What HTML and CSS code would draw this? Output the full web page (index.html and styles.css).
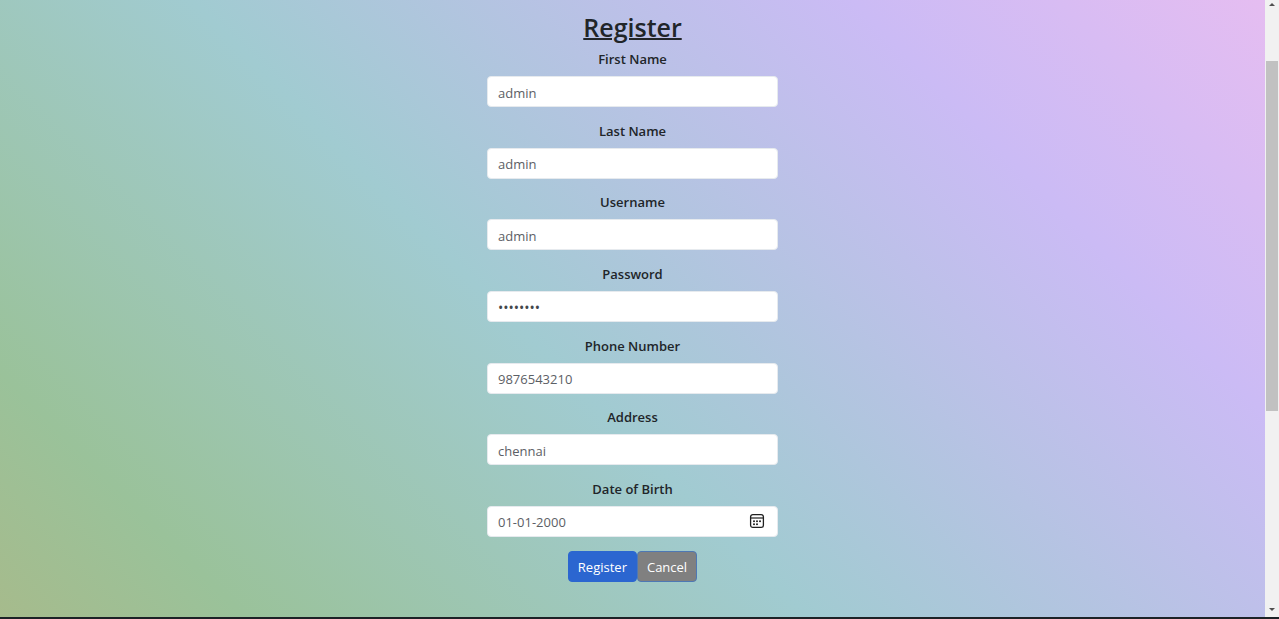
FILE: index.html
```
<!DOCTYPE html>
<html lang="en">
<head>
<meta charset="utf-8">
<meta name="viewport" content="width=device-width, initial-scale=1">
<title>Register</title>
<link rel="stylesheet" href="styles.css">
</head>
<body>
<div class="page">
  <main class="main">
    <form class="form">
      <h1 class="title">Register</h1>
      <div class="fields">
        <div class="field"><label class="label" for="first">First Name</label><input class="input" id="first" type="text" value="admin"></div>
        <div class="field"><label class="label" for="last">Last Name</label><input class="input" id="last" type="text" value="admin"></div>
        <div class="field"><label class="label" for="user">Username</label><input class="input" id="user" type="text" value="admin"></div>
        <div class="field"><label class="label" for="pass">Password</label><input class="input input-password" id="pass" type="password" value="password"></div>
        <div class="field"><label class="label" for="phone">Phone Number</label><input class="input" id="phone" type="tel" value="9876543210"></div>
        <div class="field"><label class="label" for="address">Address</label><input class="input" id="address" type="text" value="chennai"></div>
        <div class="field">
          <label class="label" for="dob">Date of Birth</label>
          <div class="date">
            <input class="date-input" id="dob" type="text" value="01-01-2000">
            <button class="picker" type="button" aria-label="Choose date">
              <svg viewBox="0 0 16 16" width="16" height="16" aria-hidden="true">
                <rect x="1.6" y="1.6" width="12.8" height="12.8" rx="2.2" fill="none" stroke="#202020" stroke-width="1.3"/>
                <path d="M1.6 5H14.4" stroke="#202020" stroke-width="1.2"/>
                <g fill="#202020"><circle cx="5" cy="8.2" r="1"/><circle cx="8" cy="8.2" r="1"/><circle cx="11" cy="8.2" r="1"/><circle cx="5" cy="11.2" r="1"/><circle cx="8" cy="11.2" r="1"/></g>
              </svg>
            </button>
          </div>
        </div>
      </div>
      <div class="actions">
        <button class="btn" type="submit">Register</button>
        <button class="btn btn-cancel" type="button">Cancel</button>
      </div>
    </form>
  </main>
  <div class="scrollbar" aria-hidden="true">
    <svg class="arrow" viewBox="0 0 8 4" width="8" height="4"><path d="M1 4L4 1L7 4Z" fill="#505050"/></svg>
    <div class="track"><div class="thumb"></div></div>
    <svg class="arrow" viewBox="0 0 8 4" width="8" height="4"><path d="M1 0L4 3L7 0Z" fill="#505050"/></svg>
  </div>
</div>
<div class="edge"></div>
</body>
</html>
```
FILE: styles.css
```
* { box-sizing: border-box; }
body {
  margin: 0;
  min-height: 100vh;
  display: flex;
  flex-direction: column;
  font-family: "Segoe UI", "Open Sans", "Noto Sans", sans-serif;
  font-size: 13px;
  line-height: 21px;
  color: #212529;
}
.page { flex: 1; display: flex; }
.main {
  flex: 1;
  display: flex;
  justify-content: center;
  padding: 11px 16px 35px;
  background: linear-gradient(45deg, #a6bb8c 0%, #9ac29a 13%, #a1cbd1 43%, #cbbbf5 78%, #e5bdf1 100%);
}
.form { width: 291px; display: flex; flex-direction: column; }
.title {
  margin: 0 0 6px;
  font-size: 25px;
  line-height: 32px;
  font-weight: 600;
  text-align: center;
  text-decoration: underline;
  text-decoration-thickness: 2px;
}
.fields { flex: 1; display: flex; flex-direction: column; justify-content: space-between; }
.field { display: flex; flex-direction: column; gap: 6px; }
.label { font-weight: 600; text-align: center; }
.input, .date {
  width: 100%;
  height: 31px;
  border: 1px solid #e6eaee;
  border-radius: 4px;
  background: #fff;
}
.input, .date-input { padding: 2px 10px 0; font: inherit; color: #5c6065; }
.input-password { font-size: 14px; color: #43474b; }
.date { display: flex; align-items: center; padding-right: 12px; }
.date-input { flex: 1; min-width: 0; border: 0; background: none; }
.picker { display: flex; padding: 0; border: 0; background: none; cursor: pointer; }
.actions { display: flex; justify-content: center; margin-top: 14px; }
.btn {
  height: 31px;
  padding: 2px 9px 0;
  border: 1px solid #2b66d0;
  border-radius: 4px;
  background: #2b66d0;
  color: #fff;
  font: inherit;
  cursor: pointer;
}
.btn-cancel { background: #808080; border-color: #4e78b4; }
.scrollbar {
  width: 14px;
  display: flex;
  flex-direction: column;
  align-items: center;
  gap: 8px;
  padding: 2px 1px 5px;
  background: #f1f1f1;
}
.arrow { display: block; }
.track { flex: 1; width: 100%; padding-top: 47px; }
.thumb { height: 65%; background: #c1c1c1; }
.edge { height: 2px; background: #1c2226; }
```
